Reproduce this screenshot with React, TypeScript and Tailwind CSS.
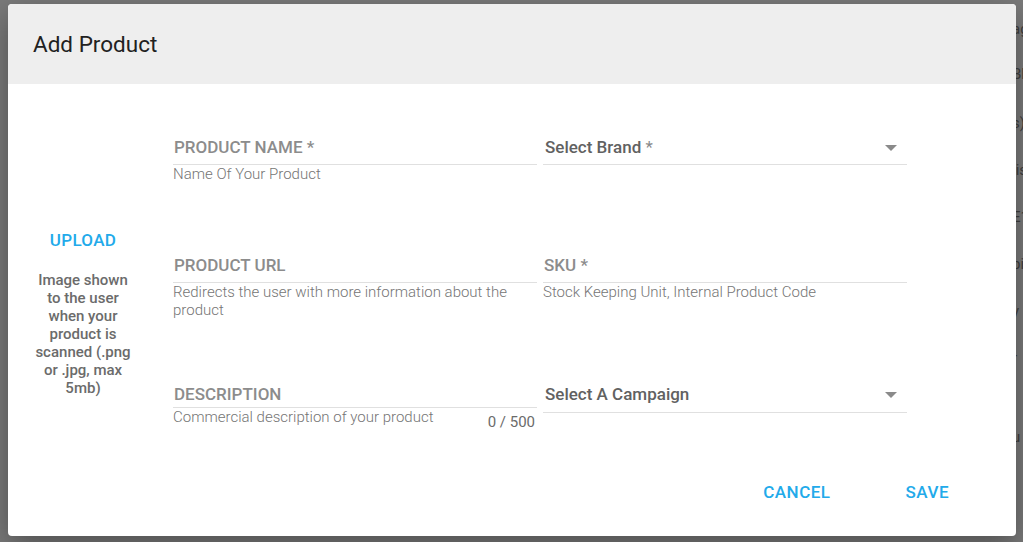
import React from "react";

const behind = [
  { t: "age", y: "mt-[20px]" },
  { t: "Bl", y: "mt-[26px]" },
  { t: "s)", y: "mt-[30px]" },
  { t: "lis", y: "mt-[28px]" },
  { t: "E1", y: "mt-[28px]" },
  { t: "pi", y: "mt-[28px]" },
  { t: "y", y: "mt-[28px]" },
  { t: "r", y: "mt-[28px]" },
  { t: "u", y: "mt-[60px]" },
];

function Caret() {
  return (
    <svg width="12" height="6" viewBox="0 0 12 6" className="shrink-0">
      <path d="M0 0h12L6 6z" fill="#8a8a8a" />
    </svg>
  );
}

function TextField({ label, helper }: { label: string; helper: React.ReactNode }) {
  return (
    <div>
      <div className="flex h-[34px] items-center border-b border-[#e0e0e0] pl-[1px] text-[17px] font-medium text-[#8c8c8c]">
        {label}
      </div>
      <div className="text-[15px] leading-[18px] font-light text-[#757575]">{helper}</div>
    </div>
  );
}

function SelectField({ label, star, h }: { label: string; star?: boolean; h: string }) {
  return (
    <div
      className={`flex ${h} items-center justify-between border-b border-[#e0e0e0] pl-[2px] pr-[10px] text-[17px] font-medium text-[#616161]`}
    >
      <span>
        {label}
        {star && <span className="font-normal text-[#8a8a8a]"> *</span>}
      </span>
      <Caret />
    </div>
  );
}

export default function App() {
  return (
    <div className="relative h-[542px] w-[1023px] overflow-hidden bg-[#7a7a7a] font-['Roboto',sans-serif]">
      {/* page content behind the overlay */}
      <div className="absolute left-[1012px] top-0 flex flex-col text-[15px] leading-[19px] text-[#3f3f3f]">
        {behind.map((b, i) => (
          <div key={i} className={b.y}>
            {b.t}
          </div>
        ))}
      </div>

      <div className="absolute left-[8px] top-[4px] flex h-[532px] w-[1008px] flex-col overflow-hidden rounded-[4px] bg-white shadow-[0_10px_30px_rgba(0,0,0,0.35)]">
        <div className="flex h-[80px] shrink-0 items-center bg-[#eeeeee] pl-[25px] pt-[2px] text-[22.5px] text-[#212121]">
          Add Product
        </div>

        <div className="flex">
          <div className="flex w-[150px] flex-col items-center pt-[147px]">
            <button className="text-[17px] leading-[19px] font-medium tracking-[0.3px] text-[#22aaea]">UPLOAD</button>
            <p className="mt-[21px] w-[100px] text-center text-[15px] leading-[18px] font-medium text-[#6b6b6b]">
              Image shown to the user when your product is scanned (.png or .jpg, max 5mb)
            </p>
          </div>

          <div className="ml-[15px] grid w-[734px] grid-cols-2 gap-x-[6px] pt-[47px]">
            <div className="h-[118px]">
              <TextField label="PRODUCT NAME *" helper="Name Of Your Product" />
            </div>
            <div className="h-[118px]">
              <SelectField label="Select Brand" star h="h-[34px]" />
            </div>

            <div className="h-[125px]">
              <TextField label="PRODUCT URL" helper="Redirects the user with more information about the product" />
            </div>
            <div className="h-[125px]">
              <TextField label="SKU *" helper="Stock Keeping Unit, Internal Product Code" />
            </div>

            <div>
              <div className="flex h-[34px] items-end border-b border-[#e0e0e0] pb-[3px] pl-[1px] text-[17px] leading-[19px] font-medium text-[#8c8c8c]">
                DESCRIPTION
              </div>
              <div className="flex justify-between pr-[2px]">
                <span className="text-[15px] leading-[18px] font-light text-[#757575]">
                  Commercial description of your product
                </span>
                <span className="mt-[5px] text-[15px] leading-[18px] text-[#6b6b6b]">0 / 500</span>
              </div>
            </div>
            <div>
              <div className="pt-[3px]">
                <SelectField label="Select A Campaign" h="h-[36px]" />
              </div>
            </div>
          </div>
        </div>

        <div className="mt-auto flex justify-end gap-[75px] pb-[34px] pr-[67px] text-[17px] leading-[19px] font-medium tracking-[0.5px] text-[#22aaea]">
          <button>CANCEL</button>
          <button>SAVE</button>
        </div>
      </div>
    </div>
  );
}
